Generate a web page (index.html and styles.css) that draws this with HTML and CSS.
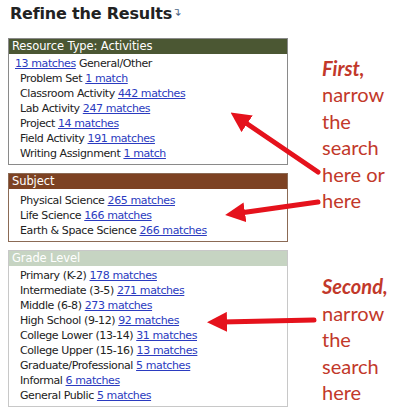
FILE: index.html
```html
<!DOCTYPE html>
<html lang="en">
<head>
    <meta charset="UTF-8">
    <title>Refine the Results</title>
    <link rel="stylesheet" href="styles.css">
</head>
<body>
    <div class="page">
        <div class="left">
            <h2 class="title">Refine the Results<span class="toggle">&#8628;</span></h2>

            <div class="facet activities">
                <div class="facet-head">Resource Type: Activities</div>
                <ul class="facet-list">
                    <li class="first"><a href="#">13 matches</a> General/Other</li>
                    <li>Problem Set <a href="#">1 match</a></li>
                    <li>Classroom Activity <a href="#">442 matches</a></li>
                    <li>Lab Activity <a href="#">247 matches</a></li>
                    <li>Project <a href="#">14 matches</a></li>
                    <li>Field Activity <a href="#">191 matches</a></li>
                    <li>Writing Assignment <a href="#">1 match</a></li>
                </ul>
            </div>

            <div class="facet subject">
                <div class="facet-head">Subject</div>
                <ul class="facet-list">
                    <li>Physical Science <a href="#">265 matches</a></li>
                    <li>Life Science <a href="#">166 matches</a></li>
                    <li>Earth &amp; Space Science <a href="#">266 matches</a></li>
                </ul>
            </div>

            <div class="facet grade">
                <div class="facet-head">Grade Level</div>
                <ul class="facet-list">
                    <li>Primary (K-2) <a href="#">178 matches</a></li>
                    <li>Intermediate (3-5) <a href="#">271 matches</a></li>
                    <li>Middle (6-8) <a href="#">273 matches</a></li>
                    <li>High School (9-12) <a href="#">92 matches</a></li>
                    <li>College Lower (13-14) <a href="#">31 matches</a></li>
                    <li>College Upper (15-16) <a href="#">13 matches</a></li>
                    <li>Graduate/Professional <a href="#">5 matches</a></li>
                    <li>Informal <a href="#">6 matches</a></li>
                    <li>General Public <a href="#">5 matches</a></li>
                </ul>
            </div>
        </div>

        <div class="notes">
            <p class="note note-first"><em>First,</em><br>narrow<br>the<br>search<br>here or<br>here</p>
            <p class="note note-second"><em>Second,</em><br>narrow<br>the<br>search<br>here</p>
        </div>

        <!-- callout arrows drawn over the boxes -->
        <svg class="arrows" width="400" height="409" viewBox="0 0 400 409">
            <defs>
                <marker id="head" markerWidth="4" markerHeight="4" refX="1" refY="2" orient="auto" markerUnits="strokeWidth">
                    <path d="M0,0 L4,2 L0,4 z" fill="#e5121c"/>
                </marker>
            </defs>
            <g stroke="#e5121c" stroke-width="5" stroke-linecap="round" fill="none" marker-end="url(#head)">
                <line x1="318" y1="172" x2="243" y2="121"/>
                <line x1="318" y1="202" x2="240" y2="213"/>
                <line x1="314" y1="320" x2="222" y2="322"/>
            </g>
        </svg>
    </div>
</body>
</html>
```

FILE: styles.css
```css
body {
    margin: 0;
    background: #fff;
    font-family: "DejaVu Sans", Verdana, sans-serif;
    color: #222;
}
.page {
    position: relative;
    display: flex;
    width: 400px;
    height: 409px;
    overflow: hidden;
}
.left {
    width: 280px;
    margin-left: 8px;
}
.title {
    margin: 4px 0 0 2px;
    height: 34px;
    font-size: 16px;
    font-weight: bold;
    color: #222;
    letter-spacing: -0.2px;
}
.toggle {
    font-size: 11px;
    color: #4a6384;
    font-weight: normal;
    vertical-align: 3px;
}
.facet {
    border: 1px solid #8a8a8a;
    margin-bottom: 8px;
}
.facet-head {
    height: 15px;
    line-height: 15px;
    padding-left: 3px;
    font-size: 11.5px;
    letter-spacing: -0.1px;
    color: #fff;
}
.activities .facet-head {
    background: #4b5733;
}
.subject {
    border-color: #8b6a55;
}
.subject .facet-head {
    background: #7d4223;
}
.grade {
    border-color: #c8c8c8;
}
.grade .facet-head {
    background: #c6d4c2;
}
.facet-list {
    list-style: none;
    margin: 0;
    padding: 2px 0 3px 11px;
    font-size: 11px;
    line-height: 15px;
    letter-spacing: -0.4px;
}
.subject .facet-list {
    padding-top: 4px;
}
.facet-list li.first {
    margin-left: -5px;
}
.facet-list a {
    color: #2b3bc0;
}
.notes {
    margin-left: 34px;
    font-family: Lato, "Open Sans", sans-serif;
    font-size: 20px;
    line-height: 26.4px;
    color: #c2382a;
}
.note {
    margin: 0;
}
.note em {
    font-weight: bold;
}
.note-first {
    margin-top: 55px;
}
.note-second {
    margin-top: 60px;
}
.arrows {
    position: absolute;
    left: 0;
    top: 0;
}
```
